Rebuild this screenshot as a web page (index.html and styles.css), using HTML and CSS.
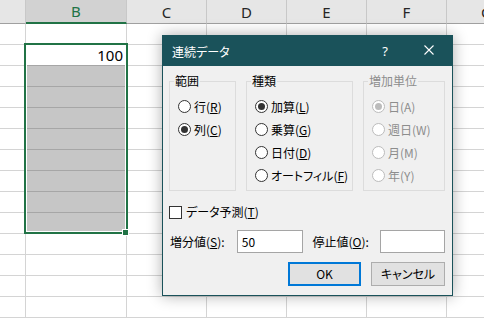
FILE: index.html
```html
<!DOCTYPE html>
<html lang="ja">
<head>
<meta charset="utf-8">
<title>連続データ</title>
<link rel="stylesheet" href="styles.css">
</head>
<body>
<div class="sheet">
  <div class="row hdr"><div></div><div class="on">B</div><div>C</div><div>D</div><div>E</div><div>F</div><div>G</div></div>
  <div class="row"><div></div><div></div><div></div><div></div><div></div><div></div><div></div></div>
  <div class="row"><div></div><div class="v">100</div><div></div><div></div><div></div><div></div><div></div></div>
  <div class="row"><div></div><div class="g"></div><div></div><div></div><div></div><div></div><div></div></div>
  <div class="row"><div></div><div class="g"></div><div></div><div></div><div></div><div></div><div></div></div>
  <div class="row"><div></div><div class="g"></div><div></div><div></div><div></div><div></div><div></div></div>
  <div class="row"><div></div><div class="g"></div><div></div><div></div><div></div><div></div><div></div></div>
  <div class="row"><div></div><div class="g"></div><div></div><div></div><div></div><div></div><div></div></div>
  <div class="row"><div></div><div class="g"></div><div></div><div></div><div></div><div></div><div></div></div>
  <div class="row"><div></div><div class="g"></div><div></div><div></div><div></div><div></div><div></div></div>
  <div class="row"><div></div><div class="g"></div><div></div><div></div><div></div><div></div><div></div></div>
  <div class="row"><div></div><div></div><div></div><div></div><div></div><div></div><div></div></div>
  <div class="row"><div></div><div></div><div></div><div></div><div></div><div></div><div></div></div>
  <div class="row"><div></div><div></div><div></div><div></div><div></div><div></div><div></div></div>
  <div class="row"><div></div><div></div><div></div><div></div><div></div><div></div><div></div></div>
</div>
<div class="selection"></div>
<div class="handle"></div>

<div class="dlg">
  <div class="title">
    <span class="t">連続データ</span>
    <span class="help">?</span>
    <span class="close"><svg width="10" height="10" viewBox="0 0 10 10"><path d="M0.5 0.5L9.5 9.5M9.5 0.5L0.5 9.5" stroke="#fff" stroke-width="1.1" fill="none"/></svg></span>
  </div>
  <div class="body">
    <div class="groups">
      <fieldset class="fs fs1">
        <legend>範囲</legend>
        <div class="opt"><span class="radio"></span>行(<u>R</u>)</div>
        <div class="opt"><span class="radio on"></span>列(<u>C</u>)</div>
      </fieldset>
      <fieldset class="fs fs2">
        <legend>種類</legend>
        <div class="opt"><span class="radio on"></span>加算(<u>L</u>)</div>
        <div class="opt"><span class="radio"></span>乗算(<u>G</u>)</div>
        <div class="opt"><span class="radio"></span>日付(<u>D</u>)</div>
        <div class="opt"><span class="radio"></span>オートフィル(<u>F</u>)</div>
      </fieldset>
      <fieldset class="fs fs3 dis">
        <legend>増加単位</legend>
        <div class="opt"><span class="radio on"></span>日(A)</div>
        <div class="opt"><span class="radio"></span>週日(W)</div>
        <div class="opt"><span class="radio"></span>月(M)</div>
        <div class="opt"><span class="radio"></span>年(Y)</div>
      </fieldset>
    </div>
    <div class="check"><span class="box"></span>データ予測(<u>T</u>)</div>
    <div class="inputs">
      <span class="lbl lbl1">増分値(<u>S</u>):</span>
      <span class="inp inp1">50</span>
      <span class="lbl lbl2">停止値(<u>O</u>):</span>
      <span class="inp inp2"></span>
    </div>
    <div class="buttons">
      <span class="btn ok">OK</span>
      <span class="btn cancel">キャンセル</span>
    </div>
  </div>
</div>
</body>
</html>
```

FILE: styles.css
```css
body {
  margin: 0;
  width: 484px;
  height: 322px;
  overflow: hidden;
  position: relative;
  background: #fff;
  font-family: "Noto Sans CJK JP", sans-serif;
}

.sheet {
  width: 527px;
}

.row {
  display: grid;
  grid-template-columns: 26px 101px 80px 80px 80px 80px 80px;
  height: 21px;
}

.row > div {
  box-sizing: border-box;
  border-right: 1px solid #d4d4d4;
  border-bottom: 1px solid #d4d4d4;
}

.hdr {
  height: 24px;
  background: #e6e6e6;
}

.hdr > div {
  border-right-color: #c8c8c8;
  border-bottom: 1px solid #a0a0a0;
  font: 15px "Noto Sans", sans-serif;
  color: #262626;
  display: flex;
  align-items: center;
  justify-content: center;
  line-height: 1;
  padding-top: 1px;
}

.hdr > div.on {
  background: #d2d2d2;
  color: #217346;
  border-bottom: 2px solid #217346;
}

.row > div.v {
  font: 15px "Noto Sans", sans-serif;
  text-align: right;
  padding-right: 3px;
  line-height: 20px;
  color: #000;
}

.row > div.g {
  background: #c6c6c6;
  border-bottom-color: #a6a6a6;
}

.row > div.v {
  border-bottom-color: #a6a6a6;
}

.selection {
  position: absolute;
  left: 24px;
  top: 43px;
  width: 104px;
  height: 191px;
  box-sizing: border-box;
  border: 2px solid #217346;
  box-shadow: inset 0 0 0 1px #fff;
}

.handle {
  position: absolute;
  left: 122px;
  top: 229px;
  width: 5px;
  height: 5px;
  background: #217346;
  border: 1px solid #fff;
}

/* dialog */
.dlg {
  position: absolute;
  left: 162px;
  top: 35px;
  width: 291px;
  height: 261px;
  box-sizing: border-box;
  border: 1px solid #1a525a;
  background: #f0f0f0;
  box-shadow: 0 0 14px rgba(0, 0, 0, 0.32);
  font-size: 12px;
  line-height: 14px;
  color: #000;
  font-feature-settings: "palt";
}

.title {
  height: 30px;
  background: #1a525a;
  color: #fff;
  display: flex;
  align-items: center;
}

.title .t {
  flex: 1;
  padding-left: 9px;
  padding-top: 1px;
}

.title .help {
  width: 42px;
  text-align: center;
  font: 13px "Noto Sans", sans-serif;
  margin-top: -1px;
}

.title .close {
  width: 46px;
  display: flex;
  justify-content: center;
  margin-top: -2px;
}

.body {
  padding: 8px 7px 0 6px;
}

.groups {
  display: flex;
  gap: 10px;
}

.fs {
  margin: 0;
  padding: 7px 0 3px 8px;
  min-inline-size: 0;
  border: 1px solid #dcdcdc;
  box-sizing: border-box;
  height: 117px;
}

.fs legend {
  padding: 0 1px;
  margin-left: -4px;
  line-height: 14px;
}

.fs1 { width: 67px; }
.fs2 { width: 107px; }
.fs3 { width: 82px; }

.opt {
  height: 23px;
  display: flex;
  align-items: center;
  white-space: nowrap;
}

.radio {
  width: 13px;
  height: 13px;
  box-sizing: border-box;
  border: 1px solid #333;
  border-radius: 50%;
  background: #fff;
  margin-right: 3px;
  display: inline-flex;
  align-items: center;
  justify-content: center;
  flex: none;
}

.radio.on::after {
  content: "";
  width: 7px;
  height: 7px;
  border-radius: 50%;
  background: #333;
}

.dis {
  color: #8d8d8d;
}

.dis .radio {
  border-color: #bcbcbc;
}

.dis .radio.on::after {
  background: #bcbcbc;
}

.check {
  margin-top: 10px;
  height: 22px;
  display: flex;
  align-items: center;
}

.box {
  width: 13px;
  height: 13px;
  box-sizing: border-box;
  border: 1px solid #333;
  background: #fff;
  margin-right: 4px;
}

.inputs {
  margin-top: 7px;
  height: 23px;
  display: flex;
  align-items: center;
}

.lbl {
  padding-left: 1px;
  box-sizing: border-box;
}

.lbl1 { width: 68px; }
.lbl2 { width: 69px; margin-left: 9px; }

.inp {
  height: 23px;
  box-sizing: border-box;
  border: 1px solid #a5a5a5;
  background: #fff;
  padding-left: 4px;
  display: flex;
  align-items: center;
  font-size: 12px;
}

.inp1 { width: 66px; }
.inp2 { width: 65px; }

.buttons {
  margin-top: 9px;
  display: flex;
  justify-content: flex-end;
  gap: 10px;
}

.btn {
  height: 24px;
  box-sizing: border-box;
  background: #e1e1e1;
  border: 1px solid #adadad;
  display: flex;
  align-items: center;
  justify-content: center;
}

.btn.ok {
  width: 73px;
  border: 2px solid #0078d7;
}

.btn.cancel {
  width: 74px;
}
```
